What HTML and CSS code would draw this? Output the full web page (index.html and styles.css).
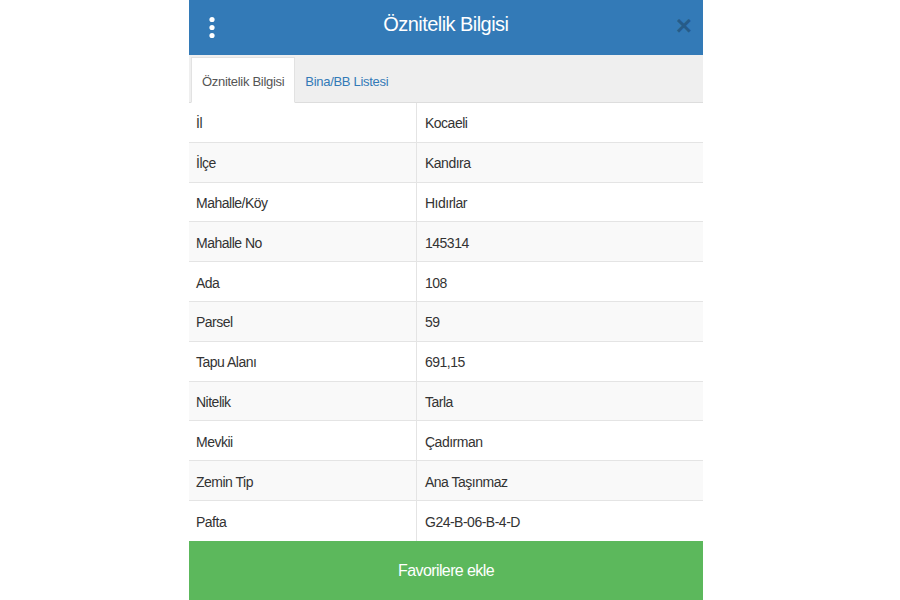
FILE: index.html
```html
<!DOCTYPE html>
<html lang="tr">
<head>
<meta charset="utf-8">
<title>Öznitelik Bilgisi</title>
<link rel="stylesheet" href="styles.css">
</head>
<body>
<div class="panel">
  <header class="header">
    <span class="kebab" aria-label="menu">
      <svg width="8" height="24" viewBox="0 0 8 24"><circle cx="4" cy="3.5" r="2.6" fill="#fff"/><circle cx="4" cy="11.5" r="2.6" fill="#fff"/><circle cx="4" cy="19.5" r="2.6" fill="#fff"/></svg>
    </span>
    <h1 class="title">Öznitelik Bilgisi</h1>
    <span class="close">×</span>
  </header>
  <nav class="tabs">
    <span class="tab active">Öznitelik Bilgisi</span>
    <span class="tab">Bina/BB Listesi</span>
  </nav>
  <div class="table">
    <div class="row"><div class="cell label">İl</div><div class="cell value">Kocaeli</div></div>
    <div class="row"><div class="cell label">İlçe</div><div class="cell value">Kandıra</div></div>
    <div class="row"><div class="cell label">Mahalle/Köy</div><div class="cell value">Hıdırlar</div></div>
    <div class="row"><div class="cell label">Mahalle No</div><div class="cell value">145314</div></div>
    <div class="row"><div class="cell label">Ada</div><div class="cell value">108</div></div>
    <div class="row"><div class="cell label">Parsel</div><div class="cell value">59</div></div>
    <div class="row"><div class="cell label">Tapu Alanı</div><div class="cell value">691,15</div></div>
    <div class="row"><div class="cell label">Nitelik</div><div class="cell value">Tarla</div></div>
    <div class="row"><div class="cell label">Mevkii</div><div class="cell value">Çadırman</div></div>
    <div class="row"><div class="cell label">Zemin Tip</div><div class="cell value">Ana Taşınmaz</div></div>
    <div class="row"><div class="cell label">Pafta</div><div class="cell value">G24-B-06-B-4-D</div></div>
  </div>
  <div class="fav">Favorilere ekle</div>
</div>
</body>
</html>
```
FILE: styles.css
```css
html, body {
  margin: 0;
  padding: 0;
  background: #fff;
  font-family: "Liberation Sans", Arial, sans-serif;
  color: #333;
}
.panel {
  width: 514px;
  margin-left: 189px;
  height: 600px;
  display: flex;
  flex-direction: column;
}
.header {
  height: 55px;
  background: #337ab7;
  display: flex;
  align-items: center;
  padding: 0 11px 6px 19px;
  box-sizing: border-box;
}
.kebab {
  display: flex;
  width: 8px;
  margin-top: 6px;
}
.title {
  flex: 1;
  margin: 0;
  text-align: center;
  color: #fff;
  font-weight: normal;
  font-size: 20px;
  letter-spacing: -0.55px;
}
.close {
  color: rgba(0,0,0,0.25);
  font-weight: bold;
  font-size: 28px;
  line-height: 1;
  margin-top: 2px;
}
.tabs {
  height: 48px;
  background: #efefef;
  border-bottom: 1px solid #ddd;
  box-sizing: border-box;
  display: flex;
  align-items: flex-end;
  padding-left: 2px;
}
.tab {
  font-size: 13px;
  letter-spacing: -0.3px;
  color: #337ab7;
  padding: 0 10px;
  height: 44px;
  display: flex;
  align-items: center;
  padding-top: 0;
  box-sizing: border-box;
  margin-bottom: -1px;
}
.tab.active {
  background: #fff;
  color: #555;
  border: 1px solid #e2e2e2;
  border-bottom: 1px solid #fff;
  height: 46px;
  padding-top: 2px;
}
.table {
  display: flex;
  flex-direction: column;
}
.row {
  display: grid;
  grid-template-columns: 227px 1fr;
  height: 39.8px;
  border-bottom: 1px solid #e4e4e4;
  box-sizing: border-box;
  font-size: 14px;
}
.row:nth-child(even) {
  background: #f9f9f9;
}
.row:last-child {
  border-bottom: none;
}
.cell {
  display: flex;
  align-items: center;
  padding-left: 7px;
  padding-top: 2px;
  letter-spacing: -0.5px;
}
.value {
  border-left: 1px solid #e4e4e4;
  padding-left: 8px;
}
.fav {
  flex: 1;
  background: #5cb85c;
  color: #fff;
  font-size: 16px;
  letter-spacing: -0.6px;
  display: flex;
  align-items: center;
  justify-content: center;
  padding-top: 2px;
}
```
